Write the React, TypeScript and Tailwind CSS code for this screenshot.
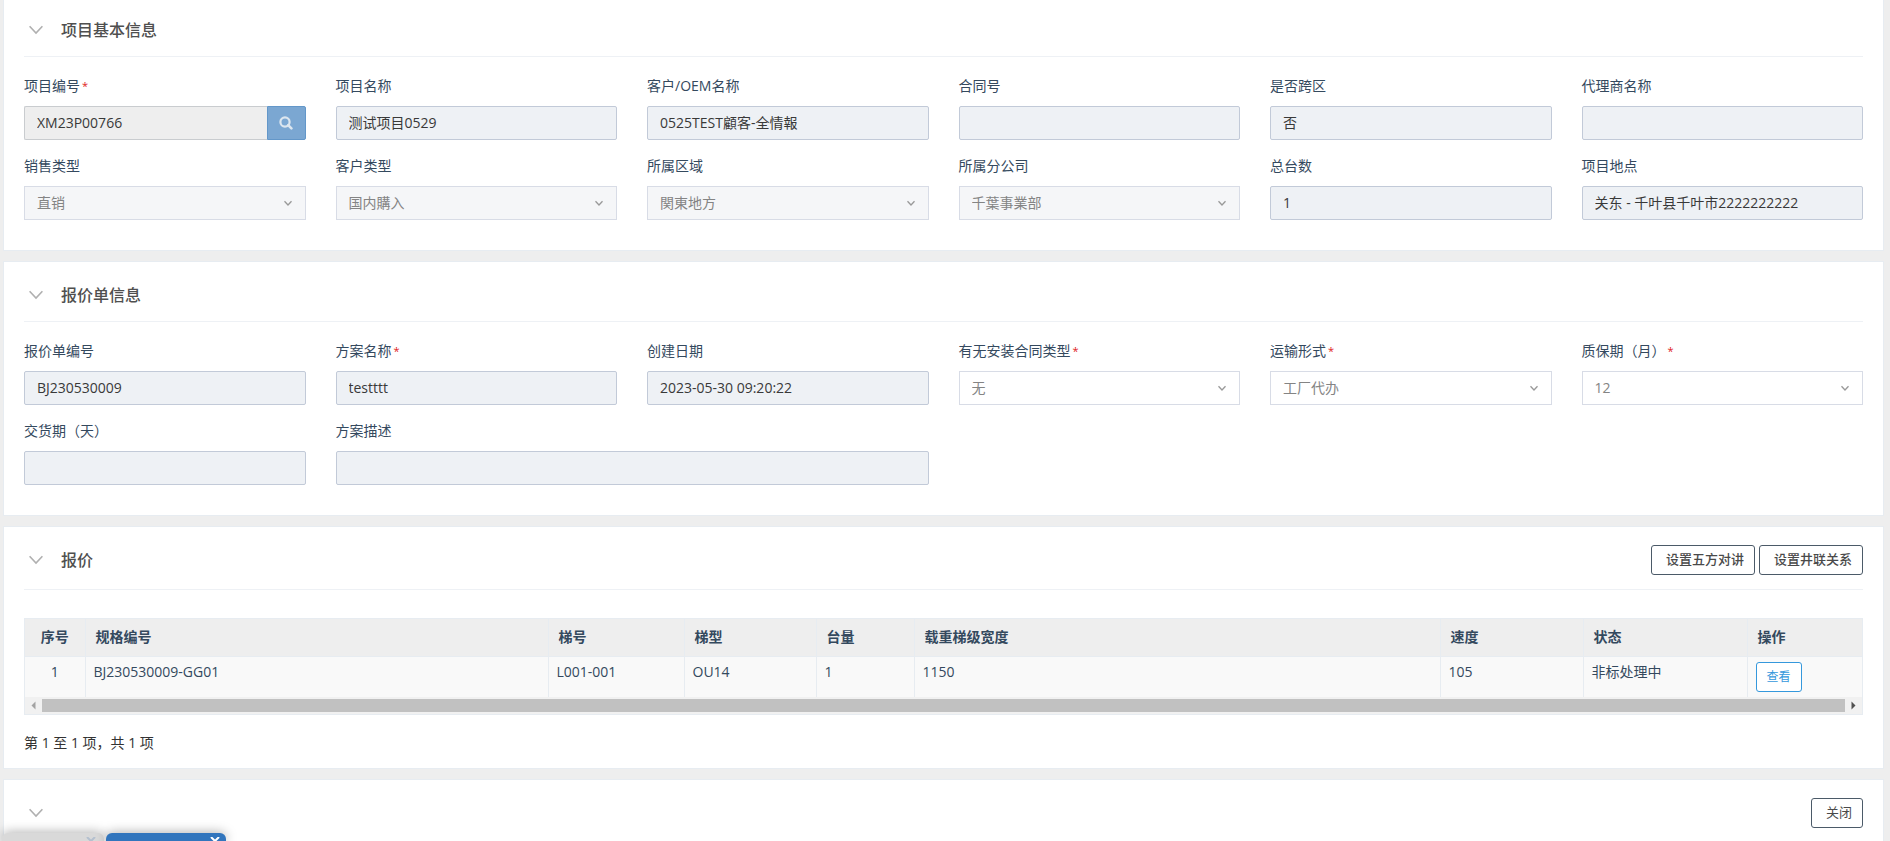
import { useState } from "react";
import type { ReactNode } from "react";

type FieldProps = {
    id: string,
    label: string,
    value?: string,
    type?: "input" | "select" | "search",
    required?: boolean,
    disabled?: boolean,
    wide?: boolean,
}

const projectFields: FieldProps[] = [
    { id: "projectNo", label: "项目编号", value: "XM23P00766", type: "search", required: true },
    { id: "projectName", label: "项目名称", value: "测试项目0529" },
    { id: "customer", label: "客户/OEM名称", value: "0525TEST顧客-全情報" },
    { id: "contractNo", label: "合同号" },
    { id: "crossRegion", label: "是否跨区", value: "否" },
    { id: "agent", label: "代理商名称" },
    { id: "saleType", label: "销售类型", value: "直销", type: "select", disabled: true },
    { id: "customerType", label: "客户类型", value: "国内購入", type: "select", disabled: true },
    { id: "region", label: "所属区域", value: "関東地方", type: "select", disabled: true },
    { id: "branch", label: "所属分公司", value: "千葉事業部", type: "select", disabled: true },
    { id: "total", label: "总台数", value: "1" },
    { id: "place", label: "项目地点", value: "关东 - 千叶县千叶市2222222222" },
];

const quoteFields: FieldProps[] = [
    { id: "quoteNo", label: "报价单编号", value: "BJ230530009" },
    { id: "planName", label: "方案名称", value: "testttt", required: true },
    { id: "createdAt", label: "创建日期", value: "2023-05-30 09:20:22" },
    { id: "installType", label: "有无安装合同类型", value: "无", type: "select", required: true },
    { id: "transport", label: "运输形式", value: "工厂代办", type: "select", required: true },
    { id: "warranty", label: "质保期（月）", value: "12", type: "select", required: true },
    { id: "delivery", label: "交货期（天）" },
    { id: "planDesc", label: "方案描述", wide: true },
];

const columns = [
    { title: "规格编号", width: "w-[463px]" },
    { title: "梯号", width: "w-[136px]" },
    { title: "梯型", width: "w-[132px]" },
    { title: "台量", width: "w-[98px]" },
    { title: "载重梯级宽度", width: "w-[526px]" },
    { title: "速度", width: "w-[143px]" },
    { title: "状态", width: "w-[164px]" },
    { title: "操作", width: "w-[115px]" },
];

const rows = [
    ["BJ230530009-GG01", "L001-001", "OU14", "1", "1150", "105", "非标处理中"],
];

function Field({ id, label, value = "", type = "input", required, disabled, wide }: FieldProps) {
    return (
        <div className={wide ? "col-span-2" : ""}>
            <label htmlFor={id} className="flex h-5 items-center text-sm text-[#34495e]">
                {label}
                {required && <span className="ml-0.5 text-[11px] text-[#e02222]">*</span>}
            </label>
            <div className="relative mt-2.5 flex h-[34px]">
                {
                    type == "select" ?
                        <>
                            <select
                                id={id}
                                disabled={disabled}
                                defaultValue={value}
                                className="w-full appearance-none border border-[#d8dce6] bg-white px-3 text-sm text-[#848484] opacity-100 disabled:bg-[#f5f6f8]"
                            >
                                <option>{value}</option>
                            </select>
                            <svg className="pointer-events-none absolute top-3.5 right-3.5 h-[7px] w-2" viewBox="0 0 8 7" fill="none" stroke="#999" strokeWidth="1.3">
                                <path d="M0.5 1.2 L4 5 L7.5 1.2" />
                            </svg>
                        </>
                        : type == "search" ?
                            <>
                                <input id={id} readOnly defaultValue={value} className="w-full min-w-0 rounded-l-xs border border-r-0 border-[#c9cccf] bg-[#eee] px-3 text-sm text-[#393939]" />
                                <button type="button" aria-label="查询" className="flex w-[39px] shrink-0 items-center justify-center rounded-r-xs border border-[#6397c9] bg-[#7ba7d2]">
                                    <svg className="h-3.5 w-3.5" viewBox="0 0 14 14" fill="none" stroke="#dce6ef" strokeWidth="2.2">
                                        <circle cx="6" cy="6" r="4.6" />
                                        <path d="M9.2 9.2 L12.4 12.4" strokeWidth="2.6" strokeLinecap="round" />
                                    </svg>
                                </button>
                            </>
                            :
                            <input id={id} readOnly defaultValue={value} className="w-full min-w-0 rounded-xs border border-[#c2cad8] bg-[#eef1f5] px-3 text-sm text-[#393939]" />
                }
            </div>
        </div>
    )
}

function Panel({ title, actions, className = "", line = true, children }: { title: string, actions?: ReactNode, className?: string, line?: boolean, children?: ReactNode }) {
    const [open, setOpen] = useState(true);

    return (
        <section className={`border border-[#e7ecf1] bg-white px-5 ${className}`}>
            <header className={`flex items-center justify-between ${line ? "border-b border-[#eef1f5] pb-3.5" : ""}`}>
                <div className="flex items-center gap-[18px] pl-[5px]">
                    <button type="button" aria-label="折叠" aria-expanded={open} onClick={() => setOpen(!open)}>
                        <svg className="h-2.5 w-3.5" viewBox="0 0 14 10" fill="none" stroke="#b0b0b0" strokeWidth="1.6">
                            <path d="M0.6 1.2 L7 8 L13.4 1.2" />
                        </svg>
                    </button>
                    <h2 className="text-base leading-6 font-medium text-[#4f4f4f]">{title}</h2>
                </div>
                <div className="flex gap-1">{actions}</div>
            </header>
            {open && children}
        </section>
    )
}

function OutlineButton({ className = "", children }: { className?: string, children: ReactNode }) {
    return (
        <button type="button" className={`h-[30px] rounded-[3px] border border-[#4b5a68] bg-white pr-2.5 pl-3.5 text-[13px] text-[#4a4a4a] ${className}`}>
            {children}
        </button>
    )
}

function Scrollbar() {
    return (
        <div className="flex h-[17px] items-center bg-[#f1f1f1]">
            <svg className="h-[17px] w-[17px]" viewBox="0 0 17 17" fill="#a3a3a3"><path d="M10.5 4.5 V12.5 L6.5 8.5 Z" /></svg>
            <div className="h-[13px] flex-1 bg-[#c1c1c1]"></div>
            <svg className="h-[17px] w-[17px]" viewBox="0 0 17 17" fill="#505050"><path d="M6.5 4.5 V12.5 L10.5 8.5 Z" /></svg>
        </div>
    )
}

function QuoteTable() {
    return (
        <div className="mt-7 border border-[#e7ecf1]">
            <table className="w-full table-fixed text-sm leading-5 text-[#34495e]">
                <thead className="bg-[#eee]">
                    <tr className="h-[37px] border-b border-[#e7ecf1]">
                        <th className="w-[60px] border-r border-[#e7ecf1] font-bold">序号</th>
                        {
                            columns.map(column => (
                                <th key={column.title} className={`border-r border-[#e7ecf1] px-2.5 text-left font-bold last:border-r-0 ${column.width}`}>{column.title}</th>
                            ))
                        }
                    </tr>
                </thead>
                <tbody className="bg-[#f9f9f9]">
                    {
                        rows.map((row, index) => (
                            <tr key={row[0]} className="align-top">
                                <td className="border-r border-[#e7ecf1] pt-[5px] text-center">{index + 1}</td>
                                {
                                    row.map((cell, i) => (
                                        <td key={i} className="border-r border-[#e7ecf1] px-2 pt-[5px]">{cell}</td>
                                    ))
                                }
                                <td className="px-2 py-[5px]">
                                    <button type="button" className="block h-[30px] rounded-[3px] border border-[#3598dc] bg-white px-2.5 text-xs text-[#3598dc]">查看</button>
                                </td>
                            </tr>
                        ))
                    }
                </tbody>
            </table>
            <Scrollbar />
        </div>
    )
}

function WindowTab({ label, className, stroke }: { label: string, className: string, stroke: string }) {
    return (
        <button type="button" aria-label={label} className={`flex h-2 justify-end rounded-t-md shadow-[0_0_12px_rgba(0,0,0,0.4)] ${className}`}>
            <svg className="mt-1 h-2 w-2.5" viewBox="0 0 10 8" fill="none" stroke={stroke} strokeWidth="2">
                <path d="M1 0 L9 8 M9 0 L1 8" />
            </svg>
        </button>
    )
}

export default function App() {
    return (
        <main className="flex h-screen flex-col gap-2.5 overflow-hidden bg-[#eee] pr-1.5 pl-[3px] font-['Open_Sans','Noto_Sans_CJK_SC',sans-serif]">
            <Panel title="项目基本信息" className="shrink-0 border-t-0 pt-[18px] pb-[30px]">
                <div className="grid grid-cols-6 gap-x-[30px] gap-y-4 pt-[19px]">
                    {projectFields.map(field => <Field key={field.id} {...field} />)}
                </div>
            </Panel>

            <Panel title="报价单信息" className="shrink-0 pt-[21px] pb-[30px]">
                <div className="grid grid-cols-6 gap-x-[30px] gap-y-4 pt-[19px]">
                    {quoteFields.map(field => <Field key={field.id} {...field} />)}
                </div>
            </Panel>

            <Panel
                title="报价"
                className="shrink-0 pt-[18px] pb-[15px]"
                actions={
                    <>
                        <OutlineButton className="font-medium">设置五方对讲</OutlineButton>
                        <OutlineButton className="font-medium">设置井联关系</OutlineButton>
                    </>
                }
            >
                <QuoteTable />
                <p className="mt-[18px] text-sm leading-5 text-[#333]">第 1 至 1 项，共 1 项</p>
            </Panel>

            <Panel title="" line={false} className="grow border-b-0 pt-[18px]" actions={<OutlineButton>关闭</OutlineButton>} />

            <nav className="fixed bottom-0 left-0.5 flex gap-0.5">
                <WindowTab label="关闭标签" className="w-[102px] bg-[#d9d9d9] pr-2" stroke="#b4c0cf" />
                <WindowTab label="关闭当前标签" className="w-[120px] bg-[#3175bd] pr-1.5" stroke="#fff" />
            </nav>
        </main>
    )
}
